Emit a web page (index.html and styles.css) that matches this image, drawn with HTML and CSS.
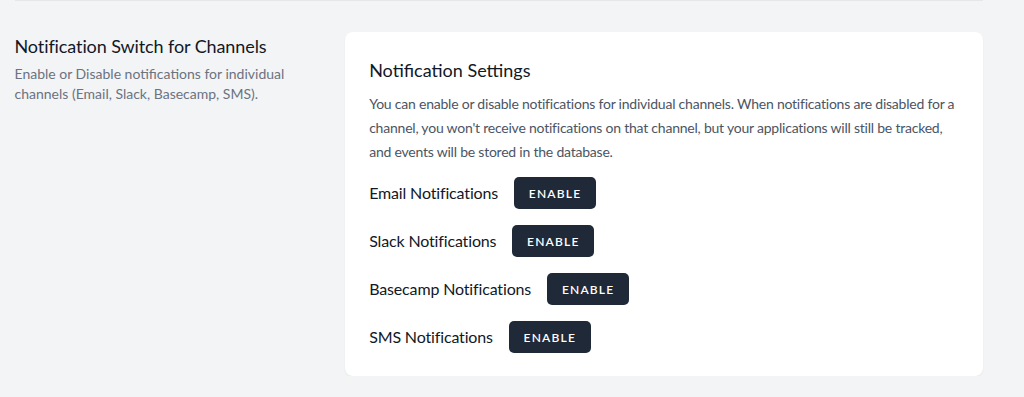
FILE: index.html
```html
<!DOCTYPE html>
<html lang="en">

<head>
    <meta charset="UTF-8">
    <meta name="viewport" content="width=device-width, initial-scale=1.0">
    <title>Notification settings</title>
    <link rel="stylesheet" href="styles.css">
</head>

<body>
    <div class="page">
        <div class="divider"></div>
        <div class="section">
            <div class="intro">
                <h3 class="intro-title">Notification Switch for Channels</h3>
                <p class="intro-text">Enable or Disable notifications for individual channels (Email, Slack, Basecamp, SMS).</p>
            </div>
            <div class="card">
                <h2 class="card-title">Notification Settings</h2>
                <p class="card-text">You can enable or disable notifications for individual channels. When notifications are disabled for a channel, you won't receive notifications on that channel, but your applications will still be tracked, and events will be stored in the database.</p>
                <div class="channels">
                    <div class="channel">
                        <span class="channel-name">Email Notifications</span>
                        <button class="btn">Enable</button>
                    </div>
                    <div class="channel">
                        <span class="channel-name">Slack Notifications</span>
                        <button class="btn">Enable</button>
                    </div>
                    <div class="channel">
                        <span class="channel-name">Basecamp Notifications</span>
                        <button class="btn">Enable</button>
                    </div>
                    <div class="channel">
                        <span class="channel-name">SMS Notifications</span>
                        <button class="btn">Enable</button>
                    </div>
                </div>
            </div>
        </div>
    </div>
</body>

</html>
```

FILE: styles.css
```css
*{
    margin: 0;
    padding: 0;
    box-sizing: border-box;
}
body{
    background-color: #f3f4f6;
    font-family: Lato, "Liberation Sans", sans-serif;
    color: #111827;
}
.page{
    width: 968px;
    margin-left: 14.5px;
}
.divider{
    height: 1px;
    background-color: #e5e7eb;
}
.section{
    display: grid;
    grid-template-columns: repeat(3, 1fr);
    gap: 24px;
    padding-top: 31px;
}
.intro-title{
    font-size: 18px;
    line-height: 28px;
    font-weight: 400;
    letter-spacing: -0.1px;
    color: #111827;
}
.intro-text{
    margin-top: 4px;
    font-size: 14px;
    line-height: 20px;
    color: #6b7280;
}
.card{
    grid-column: span 2;
    background-color: #fff;
    border-radius: 8px;
    padding: 24px 24px 23px;
    box-shadow: 0 1px 2px rgba(0, 0, 0, 0.06);
}
.card-title{
    font-size: 18px;
    line-height: 28px;
    font-weight: 400;
    color: #111827;
}
.card-text{
    margin-top: 8px;
    font-size: 14px;
    line-height: 24px;
    letter-spacing: -0.22px;
    color: #4b5563;
}
.channels{
    margin-top: 13px;
    display: flex;
    flex-direction: column;
    gap: 16px;
}
.channel{
    display: flex;
    align-items: center;
    gap: 16px;
}
.channel-name{
    font-size: 16px;
    line-height: 24px;
    letter-spacing: -0.15px;
    color: #111827;
}
.btn{
    height: 32px;
    width: 82px;
    border: none;
    border-radius: 5px;
    background-color: #1f2937;
    color: #fff;
    font-family: inherit;
    font-size: 12px;
    font-weight: 600;
    letter-spacing: 0.1em;
    text-transform: uppercase;
}
```
